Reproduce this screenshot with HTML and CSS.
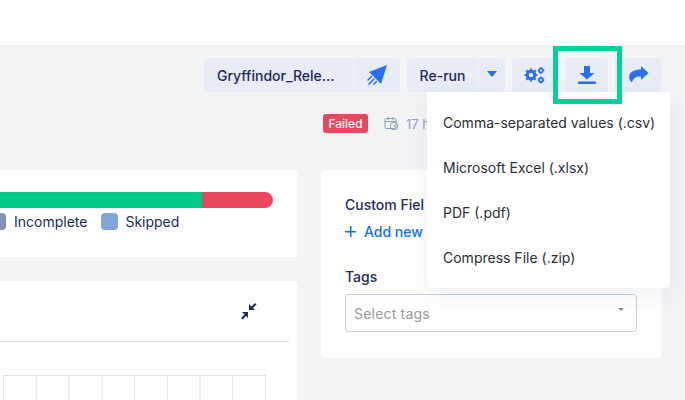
FILE: index.html
```html
<!DOCTYPE html>
<html lang="en">
<head>
<meta charset="utf-8">
<title>Test run</title>
<link rel="stylesheet" href="styles.css">
</head>
<body>
<header class="topbar"></header>
<div class="toolbar">
  <div class="group">
    <button class="btn btn-name joined-left">Gryffindor_Rele...</button>
    <button class="btn btn-icon btn-rocket joined-right" aria-label="Send">
      <svg width="24" height="24" viewBox="0 0 24 24"><path class="fill" d="M22 2 4 9l5 5 7 7z"/><path class="stroke" d="M6.500 13.500 3 17M9 16l-5 5M11.500 18.500 9 21"/></svg>
    </button>
  </div>
  <div class="group">
    <button class="btn btn-rerun joined-left">Re-run</button>
    <button class="btn btn-caret joined-right" aria-label="More"><span class="caret"></span></button>
  </div>
  <button class="btn btn-icon btn-gear" aria-label="Settings">
    <svg width="22" height="18" viewBox="0 0 22 18"><circle class="ring" cx="7" cy="9" r="3.800"/><path class="stroke thick" d="M7 2.500v2M7 13.500v2M.5 9h2M11.500 9h2M2.400 4.400l1.400 1.400M10.200 12.200l1.400 1.400M2.400 13.600l1.400-1.400M10.200 5.800l1.400-1.400"/><circle class="ring thin" cx="17" cy="4.500" r="2"/><circle class="ring thin" cx="17" cy="14" r="2"/><path class="stroke thin-teeth" d="M17 1v1M17 7v1M13.500 4.500h1M19.500 4.500h1M17 10.500v1M17 16.500v1M13.500 14h1M19.500 14h1"/></svg>
  </button>
  <button class="btn btn-icon btn-download" aria-label="Download">
    <svg width="20" height="20" viewBox="0 0 20 20"><path class="fill" d="M7 1h6v7h4.500L10 14.500 2.500 8H7z"/><rect class="fill" x="1" y="16.500" width="18" height="2.500" rx="1"/></svg>
  </button>
  <button class="btn btn-icon btn-share" aria-label="Share">
    <svg width="22" height="20" viewBox="0 0 22 20"><path class="fill" d="M14 1l7.500 7-7.500 7v-3.500C9.500 11 6.500 12.500 5 17.500 2.500 15.500 1.500 13 2.500 10 4 6 8.500 4.500 14 4.500z"/></svg>
  </button>
</div>
<div class="status">
  <span class="badge">Failed</span>
  <svg class="clock" width="15" height="15" viewBox="0 0 15 15"><rect x="1" y="2.500" width="11" height="10" rx="1.500"/><path d="M1 5.500h11M4 1v3M9 1v3"/><circle cx="10" cy="10" r="3.800"/><path d="M10 8.300V10l1 1"/></svg>
  <span class="elapsed">17 h</span>
</div>
<main class="content">
  <div class="left">
    <section class="card card-summary">
      <div class="bar"><span class="bar-pass"></span><span class="bar-fail"></span></div>
      <div class="legend">
        <span class="swatch swatch-incomplete"></span><span class="legend-label label-incomplete">Incomplete</span>
        <span class="swatch swatch-skipped"></span><span class="legend-label">Skipped</span>
      </div>
    </section>
    <section class="card card-chart">
      <div class="chart-head">
        <svg width="18" height="18" viewBox="0 0 18 18"><path class="navy" d="M10 1v6h6l-2-2 3.500-3.500L16 0l-3.500 3.500zM3 9h6v6l-2-2-3.500 3.500L2 15l3.500-3.500z"/></svg>
      </div>
      <div class="chart-grid"></div>
    </section>
  </div>
  <aside class="card card-side">
    <h3 class="side-title">Custom Fiel</h3>
    <a class="add-link"><span class="plus"></span>Add new</a>
    <h3 class="side-title tags-title">Tags</h3>
    <div class="select"><span>Select tags</span><span class="select-caret"></span></div>
  </aside>
</main>
<div class="menu">
  <div class="menu-item">Comma-separated values (.csv)</div>
  <div class="menu-item">Microsoft Excel (.xlsx)</div>
  <div class="menu-item">PDF (.pdf)</div>
  <div class="menu-item">Compress File (.zip)</div>
</div>
<div class="highlight"></div>
</body>
</html>
```
FILE: styles.css
```css
* { box-sizing: border-box; }
html, body { margin: 0; height: 400px; overflow: hidden; }
body {
  background: #f3f4f6;
  font-family: Inter, "Liberation Sans", sans-serif;
  color: #1c2b5a;
  position: relative;
}
.topbar { height: 45px; background: #fff; }

.toolbar { display: flex; justify-content: flex-end; gap: 7px; padding: 13px 24px 0 0; height: 47px; }
.group { display: flex; gap: 1px; }
.btn {
  height: 34px; border: 0; padding: 0; background: #e8ecf4; border-radius: 4px;
  font: 500 14px Inter, sans-serif; color: #1c2b5a;
  display: flex; align-items: center; justify-content: center;
}
.joined-left { border-radius: 4px 0 0 4px; }
.joined-right { border-radius: 0 4px 4px 0; }
.btn-name { width: 149px; justify-content: flex-start; padding-left: 13px; }
.btn-rocket { width: 46px; }
.btn-rerun { width: 71px; }
.btn-caret { width: 26px; }
.btn-gear { width: 46px; }
.btn-download { width: 43px; }
.btn-share { width: 46px; }
.caret { border: 5px solid transparent; border-top: 6px solid #2970f0; border-bottom: 0; width: 0; height: 0; margin-top: -3px; }
.fill { fill: #2970f0; }
.stroke { fill: none; stroke: #2970f0; stroke-width: 1.600; stroke-linecap: round; }
.stroke.thick { stroke-width: 2.200; stroke-linecap: butt; }
.stroke.thin-teeth { stroke-width: 1.200; stroke-linecap: butt; }
.ring { fill: none; stroke: #2970f0; stroke-width: 3; }
.ring.thin { stroke-width: 1.800; }

.status { display: flex; align-items: center; height: 19px; margin-top: 22px; padding-left: 323px; }
.badge {
  width: 45px; height: 19px; border-radius: 3px; background: #e9475f; color: #fff;
  font-size: 12px; font-weight: 500; display: flex; align-items: center; justify-content: center;
}
.clock { margin-left: 16px; fill: none; stroke: #8d9bb5; stroke-width: 1; }
.elapsed { margin-left: 7px; white-space: nowrap; font-size: 13px; color: #8ea0c2; }

.content { display: grid; grid-template-columns: 297px 340px; column-gap: 24px; margin-top: 37px; align-items: start; }
.left { display: flex; flex-direction: column; gap: 24px; }
.card { background: #fff; border-radius: 4px; }
.card-summary { height: 87px; padding: 22px 24px 0 0; border-radius: 0 4px 4px 0; }
.bar { display: flex; height: 16px; border-radius: 0 8px 8px 0; overflow: hidden; }
.bar-pass { width: 202px; background: #00c78a; }
.bar-fail { flex: 1; background: #e9475f; }
.legend { display: flex; align-items: center; margin-top: 5px; height: 17px; font-size: 14px; }
.swatch { width: 17px; height: 17px; border-radius: 4px; flex: none; }
.swatch-incomplete { background: #8592b5; margin-left: -11px; }
.swatch-skipped { background: #7fa3db; }
.legend-label { margin-left: 7px; color: #1c2b5a; }
.label-incomplete { margin-left: 8px; margin-right: 14px; }

.card-chart { height: 119px; padding-top: 22px; border-radius: 0 4px 0 0; }
.chart-head { height: 39px; border-bottom: 1px solid #dcdde2; margin-right: 8px; display: flex; justify-content: flex-end; padding-right: 32px; }
.chart-grid {
  margin: 33px 0 0 3px; width: 263px; height: 25px;
  border-top: 1px solid #e3e3e6; border-right: 1px solid #e3e3e6;
  background: linear-gradient(to right, #e3e3e6 1px, transparent 1px) 0 0 / 32.750px 100%;
}
.navy { fill: #1c2b5a; }

.card-side { height: 188px; padding: 26px 24px 0; }
.side-title { margin: 0; font-size: 14px; font-weight: 500; line-height: 17px; color: #1c2b5a; white-space: nowrap; }
.add-link { display: flex; align-items: center; margin-top: 10px; height: 17px; font-size: 14px; font-weight: 500; color: #0f6ff0; white-space: nowrap; }
.plus { width: 11px; height: 11px; margin-right: 8px; background: linear-gradient(#0f6ff0, #0f6ff0) center / 100% 1.500px no-repeat, linear-gradient(#0f6ff0, #0f6ff0) center / 1.500px 100% no-repeat; }
.tags-title { margin-top: 28px; }
.select {
  margin-top: 9px; height: 38px; border: 1px solid #c5cfdc; border-radius: 4px;
  padding: 0 12px 0 8px; display: flex; justify-content: space-between; align-items: center;
  font-size: 14px; color: #9a9a9a; letter-spacing: .2px;
}
.select-caret { border: 3px solid transparent; border-top: 3px solid #8a8a8a; border-bottom: 0; margin-top: -7px; }

.menu {
  position: absolute; left: 427px; top: 92px; width: 243px; height: 196px;
  background: #fff; border-radius: 0 0 4px 4px; padding-top: 8px;
  box-shadow: 0 8px 24px rgba(40, 50, 90, .07);
}
.menu-item { height: 45px; display: flex; align-items: center; padding-left: 16px; font-size: 14px; color: #2c2f36; }

.highlight { position: absolute; left: 553px; top: 46px; width: 69px; height: 58px; border: 5px solid #00d195; }
```
